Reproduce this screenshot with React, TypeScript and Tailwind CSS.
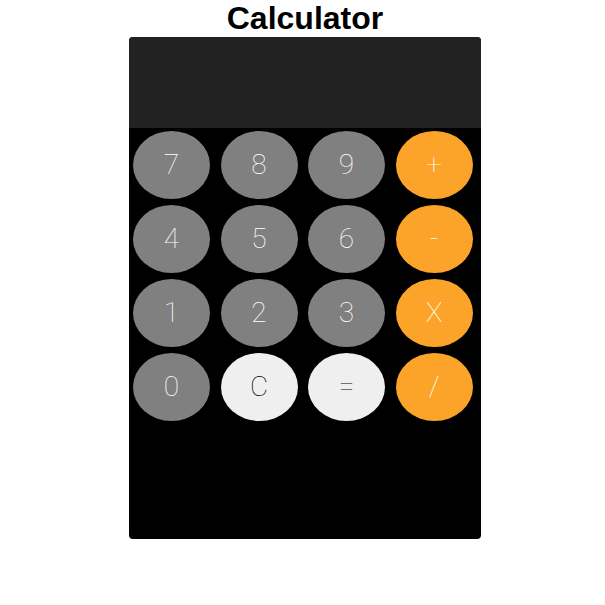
import React from "react";

const rows: { label: string; kind: "num" | "op" | "light" }[][] = [
  [
    { label: "7", kind: "num" },
    { label: "8", kind: "num" },
    { label: "9", kind: "num" },
    { label: "+", kind: "op" },
  ],
  [
    { label: "4", kind: "num" },
    { label: "5", kind: "num" },
    { label: "6", kind: "num" },
    { label: "-", kind: "op" },
  ],
  [
    { label: "1", kind: "num" },
    { label: "2", kind: "num" },
    { label: "3", kind: "num" },
    { label: "X", kind: "op" },
  ],
  [
    { label: "0", kind: "num" },
    { label: "C", kind: "light" },
    { label: "=", kind: "light" },
    { label: "/", kind: "op" },
  ],
];

function Btn({ label, kind }: { label: string; kind: "num" | "op" | "light" }) {
  const color =
    kind === "num"
      ? "bg-[#808080] text-white"
      : kind === "op"
      ? "bg-[#fca42a] text-white"
      : "bg-[#efefef] text-black";
  return (
    <button
      className={`w-[77px] h-[68px] rounded-[50%] flex items-center justify-center text-[28px] font-thin ${color}`}
      style={{ fontFamily: "Roboto, sans-serif" }}
    >
      {label}
    </button>
  );
}

export default function App() {
  return (
    <div className="w-full pl-[5px] flex flex-col items-center bg-white min-h-[605px]">
      <h1
        className="text-[32px] font-bold leading-[37px] text-black"
        style={{ fontFamily: "'Liberation Sans', Arial, sans-serif" }}
      >
        Calculator
      </h1>
      <div className="w-[352px] h-[502px] bg-black rounded-[4px] overflow-hidden flex flex-col">
        <div className="h-[91px] bg-[#222222]" />
        <div className="flex flex-col gap-[6px] pt-[3px] pl-[4px]">
          {rows.map((r, i) => (
            <div key={i} className="flex gap-[10.5px]">
              {r.map((b) => (
                <Btn key={b.label} label={b.label} kind={b.kind} />
              ))}
            </div>
          ))}
        </div>
      </div>
    </div>
  );
}
